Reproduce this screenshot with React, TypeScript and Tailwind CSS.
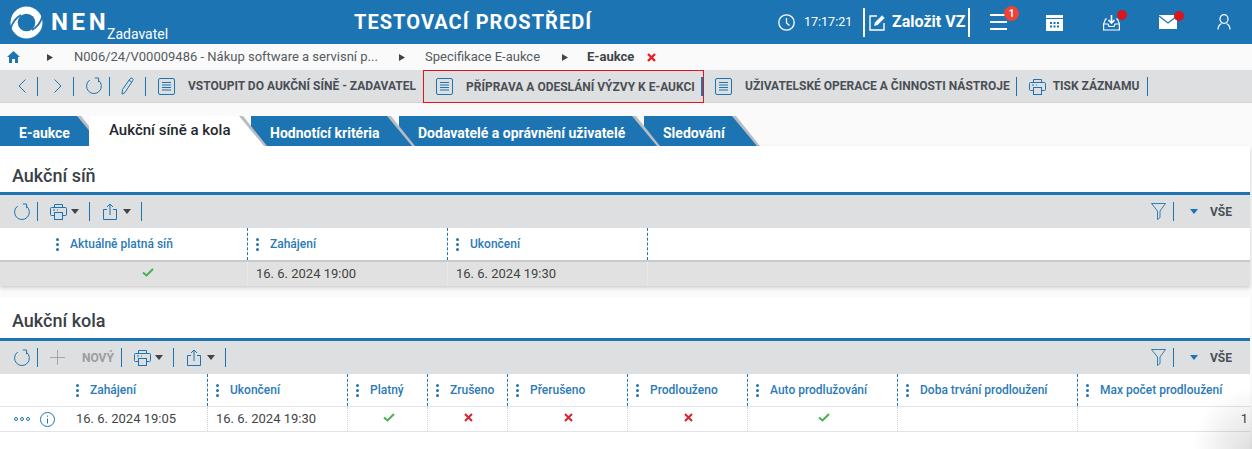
const blue = "#1d74b2";

function Sep({ className = "h-[19px] w-px" }: { className?: string }) {
  return <div className={`shrink-0 bg-[#1d74b2] ${className}`} />;
}

function Refresh() {
  return (
    <svg width="18" height="18" viewBox="0 0 18 18" fill="none" stroke={blue} strokeWidth="1">
      <path d="M4.800 3A7.400 7.400 0 1 0 13.400 3.200" />
      <path d="M9.800 1h3.800v4.200" />
    </svg>
  );
}

function DocIcon() {
  return (
    <svg width="17" height="17" viewBox="0 0 17 17" fill="none" stroke={blue} strokeWidth="1">
      <rect x="0.5" y="0.5" width="16" height="16" rx="1.5" />
      <path d="M4 4.5h9M4 7h9M4 9.5h9M4 12h9" />
    </svg>
  );
}

function PrintIcon() {
  return (
    <svg width="17" height="17" viewBox="0 0 17 17" fill="none" stroke={blue} strokeWidth="1">
      <path d="M4.5 4.5v-3h8v3" />
      <path d="M4 12.5H1.5a1 1 0 0 1-1-1v-6a1 1 0 0 1 1-1h14a1 1 0 0 1 1 1v6a1 1 0 0 1-1 1H13" />
      <rect x="4.5" y="9.5" width="8" height="7" />
      <path d="M3 7h2M7 7h1" />
    </svg>
  );
}

function ShareIcon() {
  return (
    <svg width="14" height="17" viewBox="0 0 14 17" fill="none" stroke={blue} strokeWidth="1">
      <path d="M4 6.5H.5v10h13v-10H10" />
      <path d="M7 12V1M4 4l3-3 3 3" />
    </svg>
  );
}

function Caret({ color = "#3f4449" }: { color?: string }) {
  return (
    <svg width="8" height="5" viewBox="0 0 8 5">
      <path d="M0 0h8L4 5z" fill={color} />
    </svg>
  );
}

function Funnel() {
  return (
    <svg width="15" height="17" viewBox="0 0 15 17" fill="none" stroke={blue} strokeWidth="0.9">
      <path d="M.5.5h14L9 8v6.5L6.5 16.5V8z" />
    </svg>
  );
}

function Check() {
  return (
    <svg width="12" height="9" viewBox="0 0 12 9" fill="none" stroke="#4caf50" strokeWidth="2">
      <path d="M1 4.5l3.5 3L11 1" />
    </svg>
  );
}

function Cross() {
  return (
    <svg width="9" height="9" viewBox="0 0 9 9" fill="none" stroke="#d9232e" strokeWidth="2">
      <path d="M1 1l7 7M8 1L1 8" />
    </svg>
  );
}

function Logo() {
  return (
    <svg width="33" height="33" viewBox="0 0 33 33" fill="none">
      <circle cx="16.5" cy="16.5" r="16" fill="#fff" />
      <circle cx="16.5" cy="16.5" r="8.800" fill={blue} />
      <path d="M.5 23C2.500 16 5.500 12 11 9" stroke={blue} strokeWidth="1.800" />
      <path d="M32.5 10C30.500 17 27.500 21 22 24" stroke={blue} strokeWidth="1.800" />
    </svg>
  );
}

function BellDot({ children }: { children: React.ReactNode }) {
  return (
    <div className="relative flex">
      {children}
      <div className="absolute -right-[7px] -top-[4px] h-[10px] w-[10px] rounded-full bg-[#d7161f]" />
    </div>
  );
}

function Header() {
  return (
    <header className="flex h-[44px] items-center bg-[#1d74b2] text-white">
      <div className="flex w-[354px] shrink-0 items-center pl-[10px]">
        <Logo />
        <span className="ml-[8px] w-[56px] text-[24px] font-bold leading-none tracking-[3.6px]">NEN</span>
        <span className="mt-[24px] text-[14px] leading-none">Zadavatel</span>
      </div>
      <div className="w-[238px] shrink-0 whitespace-nowrap text-[20px] font-bold tracking-[1.05px]">TESTOVACÍ PROSTŘEDÍ</div>
      <div className="ml-[186px] flex items-center">
        <svg width="17" height="17" viewBox="0 0 17 17" fill="none" stroke="#fff" strokeWidth="1.3">
          <circle cx="8.5" cy="8.5" r="7.7" />
          <path d="M8.5 4v5l3 2.5" />
        </svg>
        <span className="ml-[9px] w-[54px] text-[12.5px]">17:17:21</span>
        <div className="ml-[5px] h-[29px] w-[2px] bg-white" />
        <svg className="ml-[4px]" width="17" height="17" viewBox="0 0 17 17" fill="none" stroke="#fff" strokeWidth="1.4">
          <path d="M8 2H1v14h14V9" />
          <path d="M5.5 11.5l.7-3L13 1.7 15.3 4 8.5 10.8z" fill="#fff" strokeWidth="0.6" />
        </svg>
        <span className="ml-[6px] w-[76px] whitespace-nowrap text-[16px] font-bold">Založit VZ</span>
        <div className="h-[29px] w-[2px] bg-white" />
        <div className="relative ml-[20px] flex flex-col gap-[5px]">
          <div className="h-[2px] w-[17px] bg-white" />
          <div className="h-[2px] w-[17px] bg-white" />
          <div className="h-[2px] w-[17px] bg-white" />
          <div className="absolute -top-[8px] left-[14px] flex h-[15px] w-[15px] items-center justify-center rounded-full bg-[#ef4136] text-[10px] font-bold leading-none">1</div>
        </div>
        <svg className="ml-[39px]" width="17" height="17" viewBox="0 0 17 17">
          <path d="M0 1h17v3H0z" fill="#fff" />
          <path d="M0 5h17v12H0z" fill="#fff" />
          <path d="M4 8h2v2H4zM7.5 8h2v2h-2zM11 8h2v2h-2zM4 11.500h2v2H4zM7.500 11.500h2v2h-2zM11 11.500h2v2h-2z" fill={blue} />
        </svg>
        <div className="ml-[40px]">
          <BellDot>
            <svg width="17" height="17" viewBox="0 0 17 17" fill="none" stroke="#fff" strokeWidth="1.2">
              <path d="M4 5H2.500L.6 10v6h15.800v-6L14.500 5H13" />
              <path d="M.6 10h4.400l1 2.500h5l1-2.500h4.400" />
              <path d="M8.500 1v8M5.500 6l3 3 3-3" strokeWidth="1.600" />
            </svg>
          </BellDot>
        </div>
        <div className="ml-[39px]">
          <BellDot>
            <svg width="18" height="14" viewBox="0 0 18 14">
              <path d="M0 0h18v14H0z" fill="#fff" />
              <path d="M0 1l9 7 9-7" fill="none" stroke={blue} strokeWidth="1.200" />
            </svg>
          </BellDot>
        </div>
        <svg className="ml-[40px]" width="14" height="16" viewBox="0 0 14 16" fill="none" stroke="#fff" strokeWidth="1.200">
          <ellipse cx="7" cy="5" rx="4" ry="4.400" />
          <path d="M1 15.500c0-3 1.500-5 3.500-6M13 15.500c0-3-1.500-5-3.500-6" />
        </svg>
      </div>
    </header>
  );
}

function Breadcrumb() {
  const arrow = (
    <svg width="6" height="7" viewBox="0 0 6 7">
      <path d="M0 0l6 3.500L0 7z" fill="#3f4449" />
    </svg>
  );
  return (
    <nav className="flex h-[26px] items-center bg-[#fafafa] text-[13px] text-[#555a60]">
      <svg className="ml-[7px]" width="13" height="12" viewBox="0 0 13 12">
        <path d="M6.500 0L13 6h-2v6H8V8H5v4H2V6H0z" fill={blue} />
      </svg>
      <div className="ml-[27px]">{arrow}</div>
      <span className="ml-[21px] w-[304px] whitespace-nowrap">N006/24/V00009486 - Nákup software a servisní p...</span>
      <div className="ml-[21px]">{arrow}</div>
      <span className="ml-[20px] w-[116px] whitespace-nowrap">Specifikace E-aukce</span>
      <div className="ml-[21px]">{arrow}</div>
      <span className="ml-[19px] w-[48px] whitespace-nowrap font-bold text-[#3f4449]">E-aukce</span>
      <svg className="ml-[12px]" width="9" height="9" viewBox="0 0 9 9" fill="none" stroke="#ee1c25" strokeWidth="2.400">
        <path d="M1 1l7 7M8 1L1 8" />
      </svg>
    </nav>
  );
}

function NavCell({ w, children }: { w: string; children: React.ReactNode }) {
  return <div className={`flex items-center justify-center ${w}`}>{children}</div>;
}

function MainToolbar() {
  const label = "whitespace-nowrap text-[12px] font-bold text-[#4a4f55]";
  return (
    <div className="flex h-[33px] items-center border-b border-[#d2d3d5] bg-[#dedfe1]">
      <NavCell w="w-[37px] pl-[7px]">
        <svg width="8" height="14" viewBox="0 0 8 14" fill="none" stroke={blue} strokeWidth="1"><path d="M7.500.5L1 7l6.500 6.500" /></svg>
      </NavCell>
      <Sep />
      <NavCell w="w-[35px] pl-[5px]">
        <svg width="8" height="14" viewBox="0 0 8 14" fill="none" stroke={blue} strokeWidth="1"><path d="M.5.5L7 7 .5 13.500" /></svg>
      </NavCell>
      <Sep />
      <NavCell w="w-[35px] pl-[5px]"><Refresh /></NavCell>
      <Sep />
      <NavCell w="w-[35px]">
        <svg width="13" height="18" viewBox="0 0 13 18" fill="none" stroke={blue} strokeWidth="1">
          <path d="M1.500 12.500L9 1.800a1.600 1.600 0 0 1 2.700 1.800L4 15.500 1 17.200z" />
          <path d="M8 3.300l2.800 1.900" />
        </svg>
      </NavCell>
      <Sep />
      <div className="ml-[12px] flex items-center gap-[13px]">
        <DocIcon />
        <span className={label}>VSTOUPIT DO AUKČNÍ SÍNĚ - ZADAVATEL</span>
      </div>
      <div className="ml-[7px] mt-[1px] flex h-[33px] w-[281px] items-center border border-[#e3141e] pl-[12px]">
        <DocIcon />
        <span className={`ml-[13px] w-[235px] ${label}`}>PŘÍPRAVA A ODESLÁNÍ VÝZVY K E-AUKCI</span>
        <Sep className="h-[19px] w-[2px]" />
      </div>
      <div className="ml-[11px] flex items-center gap-[13px]">
        <DocIcon />
        <span className={label}>UŽIVATELSKÉ OPERACE A ČINNOSTI NÁSTROJE</span>
      </div>
      <div className="ml-[6px]"><Sep /></div>
      <div className="ml-[12px]"><PrintIcon /></div>
      <span className={`ml-[7px] ${label}`}>TISK ZÁZNAMU</span>
      <div className="ml-[8px]"><Sep /></div>
    </div>
  );
}

const tabs = [
  { label: "E-aukce", w: "w-[105px]", z: "z-[5]" },
  { label: "Aukční síně a kola", w: "w-[178px]", z: "z-[6]", active: true },
  { label: "Hodnotící kritéria", w: "w-[164px]", z: "z-[4]" },
  { label: "Dodavatelé a oprávnění uživatelé", w: "w-[261px]", z: "z-[3]" },
  { label: "Sledování", w: "w-[116px]", z: "z-[2]" },
];

function Tabs() {
  return (
    <div className="flex h-[43px] items-end bg-[#fafafa]">
      {tabs.map((t, i) => (
        <div
          key={t.label}
          className={`relative h-[30px] shrink-0 bg-[#b9bdc1] [clip-path:polygon(0_0,calc(100%-24px)_0,100%_100%,0_100%)] ${t.w} ${t.z} ${i > 0 ? "-ml-[16px]" : ""}`}
        >
          <div
            className={`flex h-[30px] items-center whitespace-nowrap [clip-path:polygon(0_0,calc(100%-28px)_0,calc(100%-3px)_100%,0_100%)] ${
              t.active
                ? "bg-white pb-[1px] pl-[20px] text-[15px] font-medium text-[#24282c]"
                : "bg-[#1d74b2] pl-[19px] pt-[4px] text-[14px] font-bold text-white"
            }`}
          >
            {t.label}
          </div>
        </div>
      ))}
    </div>
  );
}

function SectionToolbar({ withNew }: { withNew?: boolean }) {
  return (
    <div className="box-content flex h-[33px] items-center border-t-[3px] border-[#1d74b2] bg-[#dedfe1] pr-[2px]">
      <div className="ml-[13px]"><Refresh /></div>
      <div className="ml-[6px]"><Sep /></div>
      {withNew && (
        <>
          <svg className="ml-[12px]" width="15" height="15" viewBox="0 0 15 15" stroke="#a4a6a9" strokeWidth="1">
            <path d="M7.500 0v15M0 7.500h15" />
          </svg>
          <span className="ml-[17px] text-[12px] font-bold text-[#9b9da0]">NOVÝ</span>
          <div className="ml-[7px]"><Sep /></div>
        </>
      )}
      <div className="ml-[12px]"><PrintIcon /></div>
      <div className="ml-[4px]"><Caret /></div>
      <div className="ml-[10px]"><Sep /></div>
      <div className="ml-[13px]"><ShareIcon /></div>
      <div className="ml-[6px]"><Caret /></div>
      <div className="ml-[10px]"><Sep /></div>
      <div className="ml-auto"><Funnel /></div>
      <div className="ml-[7px]"><Sep /></div>
      <div className="ml-[16px]"><Caret color={blue} /></div>
      <span className="ml-[12px] mr-[16px] text-[12px] font-bold text-[#4a4f55]">VŠE</span>
    </div>
  );
}

function HeadCell({ label, w, first, pl }: { label: string; w: string; first?: boolean; pl?: string }) {
  return (
    <div className={`flex h-[32px] shrink-0 items-center whitespace-nowrap ${w} ${pl ?? "pl-[8px]"} ${first ? "" : "border-l border-dashed border-[#1d74b2]"}`}>
      <div className="flex flex-col gap-[2px]">
        <div className="h-[3px] w-[3px] rounded-full bg-[#1d74b2]" />
        <div className="h-[3px] w-[3px] rounded-full bg-[#1d74b2]" />
        <div className="h-[3px] w-[3px] rounded-full bg-[#1d74b2]" />
      </div>
      <span className="ml-[11px] text-[12px] font-medium text-[#2b7ab8]">{label}</span>
    </div>
  );
}

function BodyCell({ w, children, first, center, gray, pl }: { w: string; children?: React.ReactNode; first?: boolean; center?: boolean; gray?: boolean; pl?: string }) {
  return (
    <div
      className={`flex h-full shrink-0 items-center whitespace-nowrap text-[13px] text-[#444] ${w} ${center ? `justify-center pb-[3px] ${pl ?? "pl-[2px]"}` : "pl-[8px]"} ${
        first ? "" : `border-l border-dotted ${gray ? "border-[#efefef]" : "border-[#cfd3d6]"}`
      }`}
    >
      {children}
    </div>
  );
}

function RoomSection() {
  return (
    <section className="w-[1250px] bg-white shadow-[0_2px_4px_rgba(0,0,0,0.18)]">
      <h2 className="flex h-[46px] items-center pl-[12px] pt-[12px] text-[18px] font-medium text-[#3a4046]">Aukční síň</h2>
      <SectionToolbar />
      <div className="flex border-b-2 border-[#c9cacb]">
        <HeadCell first label="Aktuálně platná síň" w="w-[247px]" pl="pl-[56px]" />
        <HeadCell label="Zahájení" w="w-[200px]" />
        <HeadCell label="Ukončení" w="w-[200px]" />
        <div className="h-[32px] w-[603px] border-l border-dashed border-[#1d74b2]" />
      </div>
      <div className="flex h-[24px] bg-[#e1e1e1]">
        <BodyCell first gray center pl="pl-[48px]" w="w-[247px]"><Check /></BodyCell>
        <BodyCell gray w="w-[200px]">16. 6. 2024 19:00</BodyCell>
        <BodyCell gray w="w-[200px]">16. 6. 2024 19:30</BodyCell>
        <BodyCell gray w="w-[603px]" />
      </div>
    </section>
  );
}

const roundCols: { label: string; w: string; value: string; first?: boolean }[] = [
  { label: "Zahájení", w: "w-[139px]", value: "16. 6. 2024 19:05", first: true },
  { label: "Ukončení", w: "w-[140px]", value: "16. 6. 2024 19:30" },
  { label: "Platný", w: "w-[80px]", value: "ok" },
  { label: "Zrušeno", w: "w-[80px]", value: "no" },
  { label: "Přerušeno", w: "w-[120px]", value: "no" },
  { label: "Prodlouženo", w: "w-[120px]", value: "no" },
  { label: "Auto prodlužování", w: "w-[150px]", value: "ok" },
  { label: "Doba trvání prodloužení", w: "w-[180px]", value: "" },
];

function RoundSection() {
  return (
    <section className="relative mt-[11px] h-[153px] w-[1250px] bg-white">
      <h2 className="flex h-[41px] items-center pl-[12px] pt-[6px] text-[18px] font-medium text-[#3a4046]">Aukční kola</h2>
      <SectionToolbar withNew />
      <div className="flex border-b border-[#dfe5ea]">
        <div className="w-[68px] shrink-0" />
        {roundCols.map((c) => (
          <HeadCell key={c.label} label={c.label} w={c.w} first={c.first} />
        ))}
        <HeadCell label="Max počet prodloužení" w="w-[173px]" />
      </div>
      <div className="flex h-[25px] border-b border-[#dfe5ea]">
        <div className="flex w-[68px] shrink-0 items-center pl-[14px]">
          <div className="flex gap-[2px]">
            <div className="h-[4px] w-[4px] rounded-full border border-[#1d74b2]" />
            <div className="h-[4px] w-[4px] rounded-full border border-[#1d74b2]" />
            <div className="h-[4px] w-[4px] rounded-full border border-[#1d74b2]" />
          </div>
          <svg className="ml-[10px]" width="15" height="15" viewBox="0 0 15 15" fill="none" stroke={blue} strokeWidth="1">
            <circle cx="7.500" cy="7.500" r="7" />
            <path d="M7.500 6.500v5M7.500 3.500v1.300" />
          </svg>
        </div>
        {roundCols.map((c) => (
          <BodyCell key={c.label} w={c.w} first={c.first} center={c.value === "ok" || c.value === "no"}>
            {c.value === "ok" ? <Check /> : c.value === "no" ? <Cross /> : c.value}
          </BodyCell>
        ))}
        <BodyCell w="w-[173px]">
          <span className="ml-auto pr-[2px] text-right">1</span>
        </BodyCell>
      </div>
      <div className="pointer-events-none absolute -right-[2px] top-[90px] h-[63px] w-[60px] bg-[radial-gradient(ellipse_at_100%_100%,rgba(0,0,0,0.13),rgba(0,0,0,0)_70%)]" />
    </section>
  );
}

export default function App() {
  return (
    <main className="h-[449px] w-[1252px] overflow-hidden bg-[#fafafa] font-['Roboto',sans-serif]">
      <Header />
      <Breadcrumb />
      <MainToolbar />
      <Tabs />
      <RoomSection />
      <RoundSection />
    </main>
  );
}
